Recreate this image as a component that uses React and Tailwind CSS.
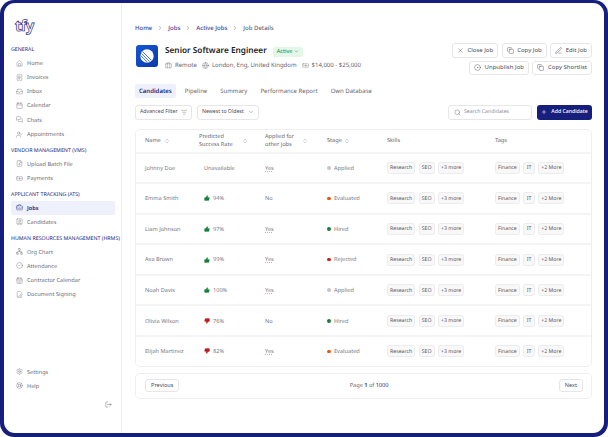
import {
  Home, ReceiptText, Inbox, Calendar, MessagesSquare, UserCheck, FileUp, Banknote, BriefcaseBusiness,
  SquareUser, Network, CircleCheck, CalendarDays, FileSignature, Settings, LifeBuoy, LogOut, ChevronRight,
  ChevronDown, ChevronsUpDown, Briefcase, Globe, X, Copy, PenLine, CircleDot, Search, Plus, ListFilter,
  ThumbsUp, ThumbsDown,
} from 'lucide-react';

const navGroups = [
  { label: 'GENERAL', items: [['Home', Home], ['Invoices', ReceiptText], ['Inbox', Inbox], ['Calendar', Calendar], ['Chats', MessagesSquare], ['Appointments', UserCheck]] },
  { label: 'VENDOR MANAGEMENT (VMS)', items: [['Upload Batch File', FileUp], ['Payments', Banknote]] },
  { label: 'APPLICANT TRACKING (ATS)', items: [['Jobs', BriefcaseBusiness], ['Candidates', SquareUser]] },
  { label: 'HUMAN RESOURCES MANAGEMENT (HRMS)', items: [['Org Chart', Network], ['Attendance', CircleCheck], ['Contractor Calendar', CalendarDays], ['Document Signing', FileSignature]] },
];

const rows = [
  { name: 'Johnny Doe', rate: null, other: 'Yes', stage: 'Applied' },
  { name: 'Emma Smith', rate: '94%', up: true, other: 'No', stage: 'Evaluated' },
  { name: 'Liam Johnson', rate: '97%', up: true, other: 'Yes', stage: 'Hired' },
  { name: 'Ava Brown', rate: '99%', up: true, other: 'Yes', stage: 'Rejected' },
  { name: 'Noah Davis', rate: '100%', up: true, other: 'Yes', stage: 'Applied' },
  { name: 'Olivia Wilson', rate: '76%', up: false, other: 'No', stage: 'Hired' },
  { name: 'Elijah Martinez', rate: '82%', up: false, other: 'Yes', stage: 'Evaluated' },
];

const stageDots = {
  Applied: 'bg-[#c4c4ca]',
  Evaluated: 'bg-[#e8590c]',
  Hired: 'bg-[#15803d]',
  Rejected: 'bg-[#c81e1e]',
};

const gridCols = 'grid grid-cols-[54px_66px_62px_60px_108px_1fr] items-center pl-[9px]';

function NavItem({ label, icon: Icon }) {
  const active = label === 'Jobs';
  return (
    <div className={`flex h-[14.2px] items-center gap-[4px] rounded-[2px] pl-[5px] ${active ? 'bg-[#eef0fb] font-semibold text-[#171f7d]' : 'text-[#6b6b73]'}`}>
      <Icon size={7} strokeWidth={1.3} />
      <span className="text-[5.6px]">{label}</span>
    </div>
  );
}

function Sidebar() {
  return (
    <aside className="flex w-[118px] shrink-0 flex-col border-r border-[#eeeeee] pl-[7px] pr-[6px]">
      <div className="mt-[12px] h-[22px] pl-[4px] text-[15px] font-bold leading-[22px] text-white tracking-[-0.8px] [-webkit-text-stroke:0.7px_#171f7d]">
        tfy
      </div>
      <div className="mt-[7px] flex flex-col">
        {navGroups.map(group => (
          <div key={group.label} className="mb-[3.6px]">
            <div className="flex h-[12px] items-center text-[5.3px] text-[#171f7d] whitespace-nowrap">{group.label}</div>
            {group.items.map(([label, icon]) => <NavItem key={label} label={label} icon={icon} />)}
          </div>
        ))}
      </div>
      <div className="mt-auto">
        <NavItem label="Settings" icon={Settings} />
        <NavItem label="Help" icon={LifeBuoy} />
        <div className="mb-[25px] mt-[8px] flex justify-end pr-[3px] text-[#55555c]">
          <LogOut size={7} strokeWidth={1.4} />
        </div>
      </div>
    </aside>
  );
}

function OutlineButton({ icon: Icon, children }) {
  return (
    <button className="flex h-[14.5px] items-center gap-[3.5px] rounded-[3px] border border-[#e6e6e8] bg-white px-[4px] text-[6px] text-[#4b4b52]">
      <Icon size={7} strokeWidth={1.5} />
      {children}
    </button>
  );
}

function Chip({ children }) {
  return <span className="min-w-[11.5px] rounded-[2.5px] border border-[#ececee] bg-[#f8f8f9] px-[2px] py-[1.5px] text-center text-[5.2px] leading-[7px] text-[#55555c]">{children}</span>;
}

function CandidateRow({ row }) {
  const Thumb = row.up ? ThumbsUp : ThumbsDown;
  return (
    <div className={`${gridCols} h-[30.6px] border-t-2 border-[#f4f4f5] text-[5.6px] text-[#77777f]`}>
      <div>{row.name}</div>
      <div className="flex items-center gap-[3px] pl-[5px]">
        {row.rate ? (
          <>
            <Thumb size={6} strokeWidth={1} className={row.up ? 'fill-[#15803d] text-[#15803d]' : 'fill-[#b91c1c] text-[#b91c1c]'} />
            {row.rate}
          </>
        ) : 'Unavailable'}
      </div>
      <div className={row.other === 'Yes' ? 'underline decoration-[#b5b5bd] decoration-dotted underline-offset-1' : ''}>{row.other}</div>
      <div className="flex items-center gap-[3.5px]">
        <span className={`h-[3.5px] w-[3.5px] rounded-full ${stageDots[row.stage]}`} />
        {row.stage}
      </div>
      <div className="flex gap-[3.5px]"><Chip>Research</Chip><Chip>SEO</Chip><Chip>+3 more</Chip></div>
      <div className="flex gap-[3.5px]"><Chip>Finance</Chip><Chip>IT</Chip><Chip>+2 More</Chip></div>
    </div>
  );
}

function HeaderCell({ children, sort = true, gap = 'gap-[3px]' }) {
  return (
    <div className={`flex items-center ${gap} text-[5.6px] leading-[7.6px] text-[#66666e]`}>
      <span>{children}</span>
      {sort && <ChevronsUpDown size={6} strokeWidth={1.2} />}
    </div>
  );
}

export default function App() {
  return (
    <div className="h-[437px] w-[608px] overflow-hidden bg-white font-['Noto_Sans',sans-serif] antialiased [text-rendering:geometricPrecision]">
      <div className="h-full w-full rounded-[14px] bg-[#171f7d] pb-[4px] pl-[4px] pr-[4px] pt-[3px]">
        <div className="flex h-full overflow-hidden rounded-[11px] bg-white">
          <Sidebar />
          <main className="min-w-0 flex-1 pl-[13px] pr-[12px] pt-[21px]">
            <nav className="flex h-[8px] items-center gap-[3px] text-[6px] font-medium text-[#3b4190]">
              <span>Home</span><ChevronRight size={6} className="mx-[2px] text-[#66666e]" />
              <span>Jobs</span><ChevronRight size={6} className="mx-[2px] text-[#66666e]" />
              <span>Active Jobs</span><ChevronRight size={6} className="mx-[2px] text-[#66666e]" />
              <span className="text-[#66666e]">Job Details</span>
            </nav>

            <div className="mt-[11px] flex items-start justify-between">
              <div className="flex gap-[7px] pl-px pt-[2px]">
                <div className="flex h-[22px] w-[22px] items-center justify-center rounded-[3px] bg-gradient-to-br from-[#1557d6] to-[#0b3aa8]">
                  <svg viewBox="0 0 24 24" width="14" height="14">
                    <circle cx="12" cy="12" r="11.5" fill="#fff" />
                    <path d="M1 11 L13 23 M2.5 7.5 L16.5 21.5 M4.5 4.5 L19.5 19.5" stroke="#0f47bd" strokeWidth="1.3" />
                  </svg>
                </div>
                <div>
                  <div className="flex h-[13px] items-center gap-[6px]">
                    <span className="text-[8.25px] font-semibold text-[#1c1c22]">Senior Software Engineer</span>
                    <span className="flex h-[10px] items-center gap-[2px] rounded-[2px] bg-[#e3f7e8] px-[4px] text-[5.6px] text-[#15803d]">
                      Active <ChevronDown size={5} strokeWidth={2} />
                    </span>
                  </div>
                  <div className="mt-[3px] flex items-center gap-[5px] text-[6px] text-[#66666e]">
                    <span className="flex items-center gap-[3px]"><Briefcase size={7} strokeWidth={1.3} />Remote</span>
                    <span className="flex items-center gap-[3px]"><Globe size={7} strokeWidth={1.3} />London, Eng, United Kingdom</span>
                    <span className="flex items-center gap-[3px]"><Banknote size={7} strokeWidth={1.3} />$14,000 - $25,000</span>
                  </div>
                </div>
              </div>
              <div className="flex flex-col items-end gap-[3px]">
                <div className="flex gap-[3.5px]">
                  <OutlineButton icon={X}>Close Job</OutlineButton>
                  <OutlineButton icon={Copy}>Copy Job</OutlineButton>
                  <OutlineButton icon={PenLine}>Edit Job</OutlineButton>
                </div>
                <div className="flex gap-[3.5px]">
                  <OutlineButton icon={CircleDot}>Unpublish Job</OutlineButton>
                  <OutlineButton icon={Copy}>Copy Shortlist</OutlineButton>
                </div>
              </div>
            </div>

            <div className="mt-[9px] flex h-[14px] items-center gap-[9px] text-[6px] text-[#66666e]">
              <span className="flex h-full items-center rounded-[2px] bg-[#eef0fb] px-[4px] font-semibold text-[#171f7d]">Candidates</span>
              <span>Pipeline</span>
              <span className="ml-[4px]">Summary</span>
              <span className="ml-[4px]">Performance Report</span>
              <span className="ml-[4px]">Own Database</span>
            </div>

            <div className="mt-[7px] flex h-[14.5px] items-stretch">
              <button className="flex items-center gap-[3px] rounded-[3px] border border-[#e6e6e8] px-[4px] text-[5.2px] text-[#4b4b52]">
                Advanced Filter <ListFilter size={6.5} strokeWidth={1.2} />
              </button>
              <button className="ml-[5px] flex items-center gap-[4px] rounded-[3px] border border-[#e6e6e8] px-[4px] text-[5.2px] text-[#4b4b52]">
                Newest to Oldest <ChevronDown size={6} strokeWidth={1.5} />
              </button>
              <div className="ml-auto flex w-[84px] items-center gap-[3px] rounded-[3px] border border-[#e6e6e8] px-[5px] text-[5.2px] text-[#8b8b93]">
                <Search size={7} strokeWidth={1.3} className="text-[#55555c]" /> Search Candidates
              </div>
              <button className="ml-[5px] flex w-[55px] items-center justify-center gap-[4px] rounded-[3px] bg-[#171f7d] text-[5.2px] font-medium text-white">
                <Plus size={6} strokeWidth={2} /> Add Candidate
              </button>
            </div>

            <div className="mt-[9px] rounded-[5px] border border-[#eeeeef]">
              <div className={`${gridCols} h-[22px]`}>
                <HeaderCell>Name</HeaderCell>
                <HeaderCell gap="gap-[9px]">Predicted<br />Success Rate</HeaderCell>
                <HeaderCell gap="gap-[8px]">Applied for<br />other jobs</HeaderCell>
                <HeaderCell gap="gap-[2px]">Stage</HeaderCell>
                <HeaderCell sort={false}>Skills</HeaderCell>
                <HeaderCell sort={false}>Tags</HeaderCell>
              </div>
              {rows.map(row => <CandidateRow key={row.name} row={row} />)}
            </div>

            <div className="mt-[6px] flex h-[26px] items-center justify-between rounded-[5px] border border-[#eeeeef] pl-[9px] pr-[8px] text-[5.6px] text-[#66666e]">
              <button className="h-[13px] rounded-[3px] border border-[#e6e6e8] px-[5px] text-[#4b4b52]">Previous</button>
              <span>Page <b className="font-semibold text-[#171f7d]">1</b> of <span className="text-[#171f7d]">1000</span></span>
              <button className="h-[13px] rounded-[3px] border border-[#e6e6e8] px-[5px] text-[#4b4b52]">Next</button>
            </div>
          </main>
        </div>
      </div>
    </div>
  );
}
